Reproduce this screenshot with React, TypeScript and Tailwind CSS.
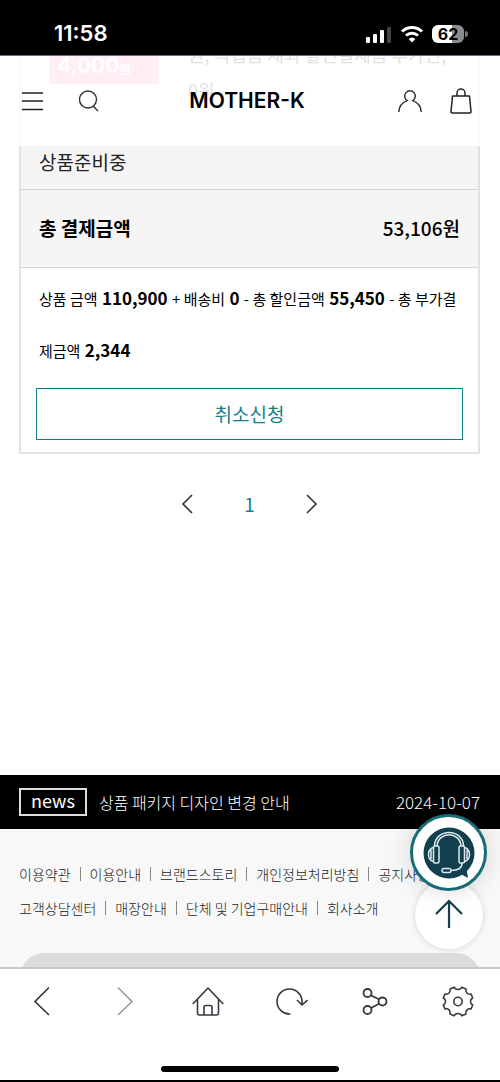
import React from 'react';

const policyLinks = ['이용약관', '이용안내', '브랜드스토리', '개인정보처리방침', '공지사항'];
const companyLinks = ['고객상담센터', '매장안내', '단체 및 기업구매안내', '회사소개'];

const StatusBar: React.FC = () => (
  <div className="flex h-14 shrink-0 items-center justify-between border-b border-gray-500 bg-black pt-3 pr-8 pl-[54px] text-white">
    <span className="font-['Inter',sans-serif] text-[22px] font-semibold">11:58</span>
    <div className="flex items-center gap-2">
      <svg width="26" height="18" viewBox="0 0 26 18" fill="white">
        <rect x="0" y="12" width="4" height="6" rx="1" />
        <rect x="7" y="9" width="4" height="9" rx="1" />
        <rect x="14" y="5" width="4" height="13" rx="1" />
        <rect x="21" y="2" width="4" height="16" rx="1" fill="#444" />
      </svg>
      <svg width="24" height="18" viewBox="0 0 24 18" fill="none" stroke="white" strokeWidth="3">
        <path d="M2 6.5a14.5 14.5 0 0 1 20 0" />
        <path d="M6 10.5a9 9 0 0 1 12 0" />
        <path d="M8.6 14a5 5 0 0 1 6.8 0L12 17.4Z" fill="white" stroke="none" />
      </svg>
      <div className="flex items-center gap-px">
        <div className="flex h-[18px] w-8 items-center justify-center rounded-md bg-linear-to-r from-white from-62% to-[#8c8c8c] to-62% font-['Inter',sans-serif] text-base font-bold text-black">
          62
        </div>
        <div className="h-[6px] w-[3px] rounded-r-full bg-[#777]" />
      </div>
    </div>
  </div>
);

const Header: React.FC = () => (
  <header className="absolute inset-x-0 top-0 z-10 flex h-[90px] items-center justify-between bg-white/85 pr-7 pl-[22px]">
    <div className="flex flex-1 items-center gap-9">
      <button aria-label="메뉴">
        <svg width="21" height="20" viewBox="0 0 21 20" stroke="#222" strokeWidth="1.6">
          <path d="M0 2h21M0 10h21M0 18.500h21" />
        </svg>
      </button>
      <button aria-label="검색">
        <svg width="22" height="22" viewBox="0 0 22 22" fill="none" stroke="#333" strokeWidth="1.4">
          <circle cx="9" cy="9.500" r="8.500" />
          <path d="M14 16l5 5" />
        </svg>
      </button>
    </div>
    <a href="#" className="font-['Inter',sans-serif] text-[21px] font-semibold text-black">
      MOTHER-K
    </a>
    <div className="flex flex-1 items-center justify-end gap-7">
      <button aria-label="마이페이지">
        <svg width="24" height="24" viewBox="0 0 24 24" fill="none" stroke="#333" strokeWidth="1.4">
          <path d="M.8 23C1 17 4 13.500 9.200 11.600A5.300 5.300 0 1 1 14.800 11.600C20 13.500 23 17 23.200 23" />
        </svg>
      </button>
      <button aria-label="장바구니">
        <svg width="22" height="26" viewBox="0 0 22 26" fill="none" stroke="#222" strokeWidth="1.5">
          <path d="M2.500 8h17l1.500 15.500a1.300 1.300 0 0 1-1.300 1.500H2.300A1.300 1.300 0 0 1 1 23.500Z" strokeLinejoin="round" />
          <path d="M7 8V5a4 4 0 0 1 8 0v3" />
        </svg>
      </button>
    </div>
  </header>
);

const OrderCard: React.FC = () => (
  <section className="mr-5 ml-[19px] border-2 border-t-0 border-[#e2e2e2]">
    <div className="flex h-[90px] justify-between overflow-hidden pr-5 pl-7">
      <div className="h-7 w-[110px] bg-[#ff90ac] pl-2 font-['Inter',sans-serif] text-[21px] leading-5 font-bold text-white">
        4,000<span className="text-xs">원</span>
      </div>
      <p className="-mt-5 w-[270px] text-lg leading-9 whitespace-nowrap text-[#333]">
        원, 적립금 제외 할인결제금 추가인,
        <br />
        0원
      </p>
    </div>
    <div className="border-b border-[#d4d4d4] bg-[#f5f5f5] px-[18px] pb-[11px] text-[19px] leading-8 text-[#222]">
      상품준비중
    </div>
    <div className="flex h-[78px] items-center justify-between border-b border-[#d4d4d4] bg-[#f5f5f5] px-[18px] text-[19px]">
      <h2 className="font-bold">총 결제금액</h2>
      <strong className="font-medium">53,106원</strong>
    </div>
    <div className="px-[15px] pt-1 pb-3">
      <p className="mb-3 px-[3px] text-[15px] leading-[51px]">
        상품 금액 <b className="mx-px text-[17px]">110,900</b> + 배송비 <b className="mx-px text-[17px]">0</b> - 총 할인금액{' '}
        <b className="mx-px text-[17px]">55,450</b> - 총 부가결제금액 <b className="mx-px text-[17px]">2,344</b>
      </p>
      <button className="h-[52px] w-full border border-[#168087] text-[19px] text-[#168087]">취소신청</button>
    </div>
  </section>
);

const Pagination: React.FC = () => (
  <nav className="mt-9 mr-5 ml-[19px] flex items-center justify-center gap-[50px]">
    <button aria-label="이전 페이지">
      <svg width="14" height="20" viewBox="0 0 14 20" fill="none" stroke="#333" strokeWidth="1.6">
        <path d="M12 1L3 10l9 9" />
      </svg>
    </button>
    <a href="#" className="text-[19px] leading-7 text-[#168087]">1</a>
    <button aria-label="다음 페이지">
      <svg width="14" height="20" viewBox="0 0 14 20" fill="none" stroke="#333" strokeWidth="1.6">
        <path d="M2 1l9 9-9 9" />
      </svg>
    </button>
  </nav>
);

const LinkRow: React.FC<{ links: string[] }> = ({ links }) => (
  <ul className="flex whitespace-nowrap">
    {links.map((link, i) => (
      <li key={link} className="flex items-center">
        {i > 0 && <span className="mx-[9px] h-[14px] w-px bg-[#888]" />}
        <a href="#">{link}</a>
      </li>
    ))}
  </ul>
);

const Footer: React.FC = () => (
  <footer className="relative bg-[#f8f8f8]">
    <div className="flex h-[54px] items-center bg-black pr-5 pl-[19px] font-light text-white">
      <span className="mr-3 border-2 border-[#ddd] px-[10px] pb-1 text-lg leading-5 font-normal">news</span>
      <a href="#">상품 패키지 디자인 변경 안내</a>
      <time className="ml-auto text-[17px]">2024-10-07</time>
    </div>
    <div className="overflow-hidden px-[19px] pt-7 text-sm leading-[34px] font-light text-[#222]">
      <LinkRow links={policyLinks} />
      <LinkRow links={companyLinks} />
      <div className="mx-px mt-7 -mb-[10px] h-6 rounded-t-3xl bg-[#dcdcdc]" />
    </div>
    {/* Floating buttons */}
    <div className="absolute right-[13px] bottom-[18px] flex flex-col items-center">
      <button
        aria-label="상담하기"
        className="z-10 flex size-[77px] items-center justify-center rounded-full border-[3px] border-[#176d76] bg-white shadow-[0_0_24px_rgba(0,0,0,0.15)]"
      >
        <svg width="52" height="52" viewBox="0 0 52 52" fill="none" stroke="#dce9ed" strokeWidth="1.500">
          <circle cx="26" cy="26" r="25.500" fill="#123f4e" stroke="none" />
          <path d="M36 46l9 5-2-12Z" fill="#123f4e" stroke="none" />
          <path d="M11.500 19C12 1 40 1 40.500 19M14 19C15 4 37 4 38 19" />
          <rect x="10.500" y="19" width="5.500" height="17" rx="1.500" />
          <rect x="36" y="19" width="5.500" height="17" rx="1.500" />
          <path d="M10 20.500C4 23 4 32 10 34.500M42 20.500C48 23 48 32 42 34.500M8 23v9M44 23v9" />
          <path d="M39 36c0 5-3 7.500-11 7.500" />
          <rect x="19" y="41.500" width="9" height="4" rx="2" />
        </svg>
      </button>
      <button
        aria-label="맨 위로"
        className="-mt-[10px] flex size-[68px] items-center justify-center rounded-full bg-white shadow-[0_0_6px_rgba(0,0,0,0.15)]"
      >
        <svg width="28" height="32" viewBox="0 0 28 32" fill="none" stroke="#123f4a" strokeWidth="2.200">
          <path d="M14 29V2M1 15L14 2l13 13" />
        </svg>
      </button>
    </div>
  </footer>
);

const BrowserBar: React.FC = () => (
  <div className="h-[115px] shrink-0 border-t-2 border-b-2 border-t-[#c8c8c8] border-b-black bg-white">
    <div className="grid grid-cols-6 pt-4">
      <button aria-label="뒤로" className="flex justify-center">
        <svg width="32" height="32" viewBox="0 0 32 32" fill="none" stroke="#333" strokeWidth="1.600">
          <path d="M23 2.500L9 16.500l14 13.500" />
        </svg>
      </button>
      <button aria-label="앞으로" className="flex justify-center">
        <svg width="32" height="32" viewBox="0 0 32 32" fill="none" stroke="#999" strokeWidth="1.600">
          <path d="M9 2.500l14 14L9 30" />
        </svg>
      </button>
      <button aria-label="홈" className="flex justify-center">
        <svg width="32" height="32" viewBox="0 0 32 32" fill="none" stroke="#333a40" strokeWidth="1.600" strokeLinejoin="round">
          <path d="M.8 19L16 3l15.200 16" />
          <path d="M5.500 14.500V28a2 2 0 0 0 2 2h17a2 2 0 0 0 2-2V14.500" />
          <path d="M12 30v-8a1.500 1.500 0 0 1 1.500-1.500h5A1.500 1.500 0 0 1 20 22v8" />
        </svg>
      </button>
      <button aria-label="새로고침" className="flex justify-center">
        <svg width="32" height="32" viewBox="0 0 32 32" fill="none" stroke="#333a40" strokeWidth="1.600">
          <path d="M14.500 29A12.500 12.500 0 1 1 26 17V20M21 15l5 5 5.500-5" />
        </svg>
      </button>
      <button aria-label="공유" className="flex justify-center">
        <svg width="32" height="32" viewBox="0 0 32 32" fill="none" stroke="#333a40" strokeWidth="1.800">
          <circle cx="8.500" cy="8" r="4" />
          <circle cx="23.500" cy="16.500" r="4" />
          <circle cx="8.500" cy="25" r="4" />
          <path d="M12 10.500l8.500 4M12 23l8.500-4.500" />
        </svg>
      </button>
      <button aria-label="설정" className="flex justify-center">
        <svg width="32" height="32" viewBox="0 0 32 32" fill="none" stroke="#333a40" strokeWidth="1.600" strokeLinejoin="round">
          <path d="M12.200 2.200C13.500 5.200 18.500 5.200 19.800 2.200L24 3.900C23 7.200 25.800 10 29 9L30.700 13C27.700 14.500 27.700 18.500 30.700 20L29 24C25.800 23 23 25.800 24 29L19.800 30.700C18.500 27.700 13.500 27.700 12.200 30.700L8 29C9 25.800 6.200 23 3 24L1.300 20C4.300 18.500 4.300 14.500 1.300 13L3 9C6.200 10 9 7.200 8 3.900Z" />
          <circle cx="16" cy="16.500" r="4.200" />
        </svg>
      </button>
    </div>
    <div className="mx-auto mt-[49px] h-[6px] w-[178px] rounded-full bg-black" />
  </div>
);

const App: React.FC = () => {
  return (
    <div className="flex h-screen flex-col bg-white font-['Noto_Sans_CJK_KR',sans-serif] text-black">
      <StatusBar />
      <main className="relative flex flex-1 flex-col overflow-hidden">
        <Header />
        <OrderCard />
        <Pagination />
        <div className="mt-auto">
          <Footer />
        </div>
      </main>
      <BrowserBar />
    </div>
  );
};

export default App;
